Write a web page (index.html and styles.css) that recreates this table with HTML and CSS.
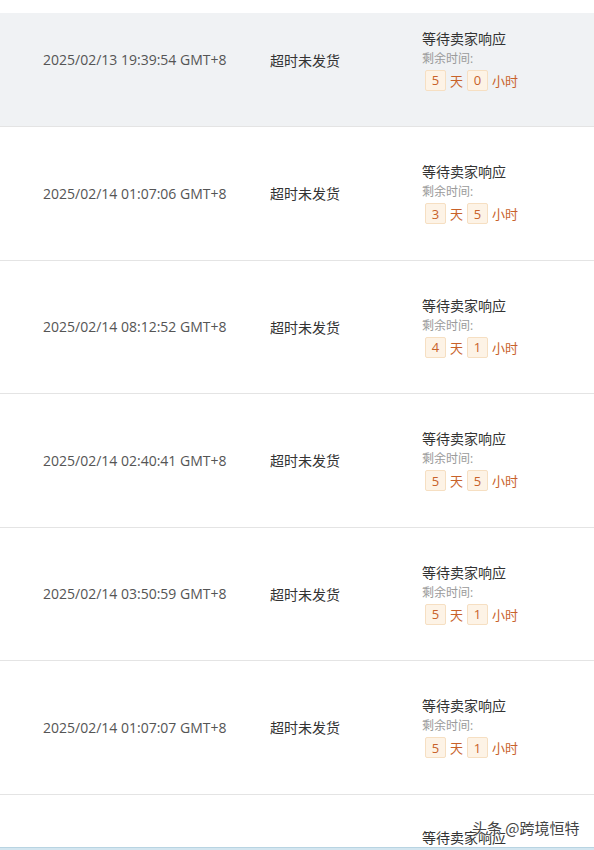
FILE: index.html
```html
<!DOCTYPE html>
<html lang="zh-CN">
<head>
    <meta charset="UTF-8">
    <meta name="viewport" content="width=device-width, initial-scale=1.0">
    <title>订单列表</title>
    <link rel="stylesheet" href="styles.css">
</head>
<body>
    <div class="top-gap"></div>

    <!-- Order rows -->
    <div class="order-list">
        <div class="order-row first active">
            <div class="col-time">2025/02/13 19:39:54 GMT+8</div>
            <div class="col-reason">超时未发货</div>
            <div class="col-status">
                <div class="status-title">等待卖家响应</div>
                <div class="status-label">剩余时间:</div>
                <div class="countdown">
                    <span class="num">5</span><span class="unit">天</span><span class="num">0</span><span class="unit">小时</span>
                </div>
            </div>
        </div>

        <div class="order-row">
            <div class="col-time">2025/02/14 01:07:06 GMT+8</div>
            <div class="col-reason">超时未发货</div>
            <div class="col-status">
                <div class="status-title">等待卖家响应</div>
                <div class="status-label">剩余时间:</div>
                <div class="countdown">
                    <span class="num">3</span><span class="unit">天</span><span class="num">5</span><span class="unit">小时</span>
                </div>
            </div>
        </div>

        <div class="order-row">
            <div class="col-time">2025/02/14 08:12:52 GMT+8</div>
            <div class="col-reason">超时未发货</div>
            <div class="col-status">
                <div class="status-title">等待卖家响应</div>
                <div class="status-label">剩余时间:</div>
                <div class="countdown">
                    <span class="num">4</span><span class="unit">天</span><span class="num">1</span><span class="unit">小时</span>
                </div>
            </div>
        </div>

        <div class="order-row">
            <div class="col-time">2025/02/14 02:40:41 GMT+8</div>
            <div class="col-reason">超时未发货</div>
            <div class="col-status">
                <div class="status-title">等待卖家响应</div>
                <div class="status-label">剩余时间:</div>
                <div class="countdown">
                    <span class="num">5</span><span class="unit">天</span><span class="num">5</span><span class="unit">小时</span>
                </div>
            </div>
        </div>

        <div class="order-row">
            <div class="col-time">2025/02/14 03:50:59 GMT+8</div>
            <div class="col-reason">超时未发货</div>
            <div class="col-status">
                <div class="status-title">等待卖家响应</div>
                <div class="status-label">剩余时间:</div>
                <div class="countdown">
                    <span class="num">5</span><span class="unit">天</span><span class="num">1</span><span class="unit">小时</span>
                </div>
            </div>
        </div>

        <div class="order-row">
            <div class="col-time">2025/02/14 01:07:07 GMT+8</div>
            <div class="col-reason">超时未发货</div>
            <div class="col-status">
                <div class="status-title">等待卖家响应</div>
                <div class="status-label">剩余时间:</div>
                <div class="countdown">
                    <span class="num">5</span><span class="unit">天</span><span class="num">1</span><span class="unit">小时</span>
                </div>
            </div>
        </div>

        <div class="order-row last">
            <div class="col-time"></div>
            <div class="col-reason"></div>
            <div class="col-status">
                <div class="status-title">等待卖家响应</div>
            </div>
        </div>
    </div>

    <div class="bottom-bar"></div>

    <div class="watermark">头条 @跨境恒特</div>
</body>
</html>
```

FILE: styles.css
```css
* {
    margin: 0;
    padding: 0;
    box-sizing: border-box;
}

:root {
    --text: #555;
    --title: #333;
    --muted: #9a9a9a;
    --line: #e4e4e4;
    --hover: #f0f2f4;
    --accent: #c8622a;
    --box-bg: #fdf3e6;
    --box-border: #f6dfc2;
}

body {
    width: 594px;
    height: 850px;
    overflow: hidden;
    background: #fff;
    font-family: "Open Sans", "Noto Sans CJK SC", sans-serif;
    font-size: 14px;
    color: var(--text);
    position: relative;
}

.top-gap {
    height: 13px;
}

/* Rows */
.order-list {
    display: flex;
    flex-direction: column;
}

.order-row {
    display: grid;
    grid-template-columns: 227px 152px 1fr;
    align-items: center;
    height: 133.5px;
    padding-left: 43px;
    border-bottom: 1px solid var(--line);
}

.order-row.first {
    height: 114px;
    padding-bottom: 20px;
}

.order-row.active {
    background-color: var(--hover);
}

.order-row.last {
    height: 52px;
    align-items: end;
    border-bottom: none;
}

.col-reason {
    color: var(--title);
}

.col-status {
    display: flex;
    flex-direction: column;
}

.status-title {
    color: var(--title);
    line-height: 19px;
}

.status-label {
    color: var(--muted);
    font-size: 12px;
    line-height: 20px;
    margin-top: 1px;
}

.countdown {
    display: flex;
    align-items: center;
    gap: 3px;
    margin-top: 1px;
    padding-left: 3px;
    color: var(--accent);
    font-size: 13px;
}

.countdown .num {
    width: 21px;
    height: 21px;
    display: flex;
    align-items: center;
    justify-content: center;
    background-color: var(--box-bg);
    border: 1px solid var(--box-border);
    border-radius: 2px;
}

.countdown .unit {
    padding: 0 1px;
}

.bottom-bar {
    height: 4px;
    background-color: #d3e6f0;
    border-top: 1px solid #b9d4e2;
}

.watermark {
    position: absolute;
    left: 472px;
    top: 817px;
    font-family: "Noto Sans CJK SC", sans-serif;
    font-size: 15px;
    color: #444;
    text-shadow: 0 0 2px #fff, 0 0 2px #fff;
}
```
